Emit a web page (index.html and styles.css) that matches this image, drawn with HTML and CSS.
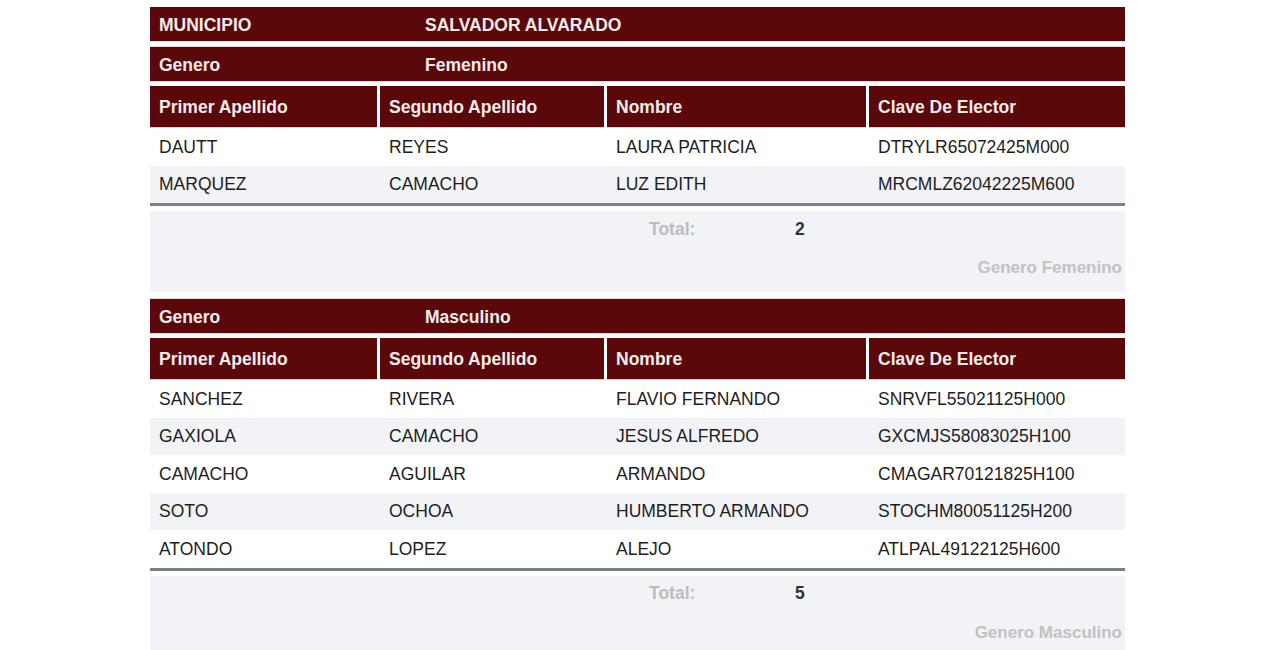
FILE: index.html
```html
<!DOCTYPE html>
<html lang="es">
<head>
<meta charset="utf-8">
<title>Reporte</title>
<link rel="stylesheet" href="styles.css">
</head>
<body>
<div class="report">
  <div class="bar"><span>MUNICIPIO</span><span>SALVADOR ALVARADO</span></div>

  <section class="group">
    <div class="bar"><span>Genero</span><span>Femenino</span></div>
    <div class="grid head">
      <div>Primer Apellido</div><div>Segundo Apellido</div><div>Nombre</div><div>Clave De Elector</div>
    </div>
    <div class="rows">
      <div class="grid row"><div>DAUTT</div><div>REYES</div><div>LAURA PATRICIA</div><div>DTRYLR65072425M000</div></div>
      <div class="grid row"><div>MARQUEZ</div><div>CAMACHO</div><div>LUZ EDITH</div><div>MRCMLZ62042225M600</div></div>
    </div>
    <div class="summary">
      <div class="total"><span class="label">Total:</span><span class="num">2</span></div>
      <div class="caption">Genero Femenino</div>
    </div>
  </section>

  <section class="group">
    <div class="bar"><span>Genero</span><span>Masculino</span></div>
    <div class="grid head">
      <div>Primer Apellido</div><div>Segundo Apellido</div><div>Nombre</div><div>Clave De Elector</div>
    </div>
    <div class="rows">
      <div class="grid row"><div>SANCHEZ</div><div>RIVERA</div><div>FLAVIO FERNANDO</div><div>SNRVFL55021125H000</div></div>
      <div class="grid row"><div>GAXIOLA</div><div>CAMACHO</div><div>JESUS ALFREDO</div><div>GXCMJS58083025H100</div></div>
      <div class="grid row"><div>CAMACHO</div><div>AGUILAR</div><div>ARMANDO</div><div>CMAGAR70121825H100</div></div>
      <div class="grid row"><div>SOTO</div><div>OCHOA</div><div>HUMBERTO ARMANDO</div><div>STOCHM80051125H200</div></div>
      <div class="grid row"><div>ATONDO</div><div>LOPEZ</div><div>ALEJO</div><div>ATLPAL49122125H600</div></div>
    </div>
    <div class="summary">
      <div class="total"><span class="label">Total:</span><span class="num">5</span></div>
      <div class="caption">Genero Masculino</div>
    </div>
  </section>
</div>
</body>
</html>
```

FILE: styles.css
```css
html, body {
  margin: 0;
  padding: 0;
  background: #ffffff;
}

body {
  padding-top: 7px;
  font-family: "Liberation Sans", Arial, sans-serif;
  font-size: 17.5px;
  color: #1e1e1e;
}

.report {
  width: 975px;
  margin: 0 auto;
}

.bar {
  display: grid;
  grid-template-columns: 266px 1fr;
  align-items: center;
  height: 34px;
  padding-left: 9px;
  background: #5a080a;
  color: #f4ecec;
  font-weight: bold;
  border-bottom: 1px solid #e9d6d6;
  box-sizing: content-box;
}

.bar > span {
  padding-top: 2px;
}

.report > .bar {
  margin-bottom: 4px;
}

.group > .bar {
  border-top: 1px solid #e9d6d6;
  margin-bottom: 4px;
}

.grid {
  display: grid;
  grid-template-columns: 227px 224px 259px 256px;
  column-gap: 3px;
}

.grid > div {
  padding-left: 9px;
  display: flex;
  align-items: center;
  white-space: nowrap;
  box-sizing: border-box;
}

.head {
  background: #ffffff;
}

.head > div {
  height: 42px;
  padding-top: 2px;
  background: #5a080a;
  color: #f4ecec;
  font-weight: bold;
  border-bottom: 1px solid #e3cccc;
}

.rows {
  border-bottom: 3px solid #788188;
}

.row > div {
  height: 37.5px;
  padding-top: 1px;
}

.row {
  background: #ffffff;
}

.row:nth-child(even) {
  background: #f2f3f6;
}

.summary {
  margin-top: 5px;
  background: #f2f3f6;
  height: 81px;
  display: flex;
  flex-direction: column;
  margin-bottom: 6px;
}

.total {
  display: flex;
  align-items: center;
  height: 34px;
  padding-top: 1px;
  font-weight: bold;
}

.total .label {
  margin-left: 499px;
  width: 146px;
  color: #bdbdbd;
}

.total .num {
  color: #333333;
}

.caption {
  margin-top: 12px;
  text-align: right;
  padding-right: 3px;
  font-size: 17px;
  font-weight: bold;
  color: #c2c2c2;
}
```
